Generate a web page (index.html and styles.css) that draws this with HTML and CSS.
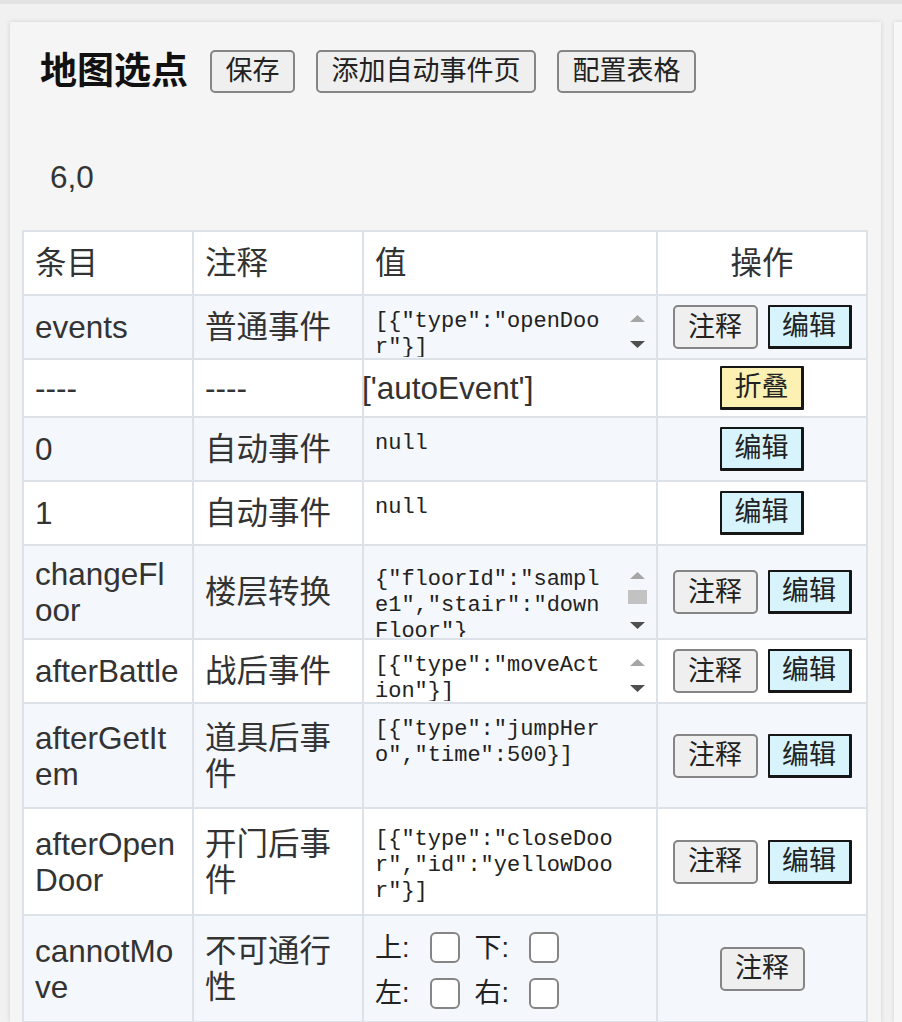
FILE: index.html
```html
<!DOCTYPE html>
<html lang="zh-CN">
<head>
<meta charset="utf-8">
<title>地图选点</title>
<link rel="stylesheet" href="styles.css">
</head>
<body>
<div class="topline"></div>
<div class="page">
  <section class="panel">
    <div class="head">
      <h2 class="title">地图选点</h2>
      <button class="btn">保存</button>
      <button class="btn">添加自动事件页</button>
      <button class="btn">配置表格</button>
    </div>
    <div class="coord">6,0</div>
    <table class="grid">
      <colgroup><col class="c1"><col class="c2"><col class="c3"><col class="c4"></colgroup>
      <thead>
        <tr class="r64"><th>条目</th><th>注释</th><th>值</th><th class="op">操作</th></tr>
      </thead>
      <tbody>
        <tr class="r64">
          <td class="key">events</td><td>普通事件</td>
          <td class="val"><div class="ta"><div class="ta-text">[{"type":"openDoor"}]</div><div class="sb"><span class="sb-btn"><svg width="15" height="7" viewBox="0 0 15 7"><path d="M7.5 0L15 7H0z" fill="#a6a6a6"/></svg></span><span class="sb-btn"><svg width="15" height="7" viewBox="0 0 15 7"><path d="M0 0H15L7.5 7z" fill="#4f4f4f"/></svg></span></div></div></td>
          <td class="op"><div class="ops"><button class="btn sm">注释</button><button class="btn sm edit">编辑</button></div></td>
        </tr>
        <tr class="r58">
          <td class="key">----</td><td>----</td>
          <td class="val-plain">['autoEvent']</td>
          <td class="op"><div class="ops"><button class="btn sm fold">折叠</button></div></td>
        </tr>
        <tr class="r64">
          <td class="key">0</td><td>自动事件</td>
          <td class="val"><div class="ta"><div class="ta-text">null</div></div></td>
          <td class="op"><div class="ops"><button class="btn sm edit">编辑</button></div></td>
        </tr>
        <tr class="r64">
          <td class="key">1</td><td>自动事件</td>
          <td class="val"><div class="ta"><div class="ta-text">null</div></div></td>
          <td class="op"><div class="ops"><button class="btn sm edit">编辑</button></div></td>
        </tr>
        <tr class="r94">
          <td class="key">changeFloor</td><td>楼层转换</td>
          <td class="val pt17"><div class="ta tall"><div class="ta-text">{"floorId":"sample1","stair":"downFloor"}</div><div class="sb"><span class="sb-btn"><svg width="15" height="7" viewBox="0 0 15 7"><path d="M7.5 0L15 7H0z" fill="#a6a6a6"/></svg></span><span class="sb-track"><span class="sb-thumb"></span></span><span class="sb-btn"><svg width="15" height="7" viewBox="0 0 15 7"><path d="M0 0H15L7.5 7z" fill="#4f4f4f"/></svg></span></div></div></td>
          <td class="op"><div class="ops"><button class="btn sm">注释</button><button class="btn sm edit">编辑</button></div></td>
        </tr>
        <tr class="r64">
          <td class="key">afterBattle</td><td>战后事件</td>
          <td class="val"><div class="ta"><div class="ta-text">[{"type":"moveAction"}]</div><div class="sb"><span class="sb-btn"><svg width="15" height="7" viewBox="0 0 15 7"><path d="M7.5 0L15 7H0z" fill="#a6a6a6"/></svg></span><span class="sb-btn"><svg width="15" height="7" viewBox="0 0 15 7"><path d="M0 0H15L7.5 7z" fill="#4f4f4f"/></svg></span></div></div></td>
          <td class="op"><div class="ops"><button class="btn sm">注释</button><button class="btn sm edit">编辑</button></div></td>
        </tr>
        <tr class="r105">
          <td class="key">afterGetItem</td><td>道具后事件</td>
          <td class="val"><div class="ta full"><div class="ta-text">[{"type":"jumpHero","time":500}]</div></div></td>
          <td class="op"><div class="ops"><button class="btn sm">注释</button><button class="btn sm edit">编辑</button></div></td>
        </tr>
        <tr class="r107">
          <td class="key">afterOpenDoor</td><td>开门后事件</td>
          <td class="val pt13"><div class="ta full"><div class="ta-text wide">[{"type":"closeDoor","id":"yellowDoor"}]</div></div></td>
          <td class="op"><div class="ops"><button class="btn sm">注释</button><button class="btn sm edit">编辑</button></div></td>
        </tr>
        <tr class="r107">
          <td class="key">cannotMove</td><td>不可通行性</td>
          <td class="val">
            <div class="dirs">
              <div class="dir-line"><span class="lab">上:</span><input type="checkbox" class="cb"><span class="lab">下:</span><input type="checkbox" class="cb"></div>
              <div class="dir-line"><span class="lab">左:</span><input type="checkbox" class="cb"><span class="lab">右:</span><input type="checkbox" class="cb"></div>
            </div>
          </td>
          <td class="op"><div class="ops"><button class="btn sm">注释</button></div></td>
        </tr>
      </tbody>
    </table>
  </section>
  <aside class="side"></aside>
</div>
</body>
</html>
```

FILE: styles.css
```css
* { box-sizing: border-box; }
html, body { margin: 0; height: 100%; }
body {
  background: #f1f1f1;
  font-family: "Liberation Sans", "Noto Sans CJK SC", sans-serif;
  color: #333;
  overflow: hidden;
}
.topline { height: 4px; background: #e3e3e3; }
.page {
  display: flex;
  gap: 13px;
  padding: 18px 0 0 10px;
  height: calc(100% - 4px);
}
.panel {
  flex: 0 0 870px;
  background: #f5f5f5;
  box-shadow: 0 0 5px rgba(0, 0, 0, 0.13);
  padding: 0 13px 0 12px;
}
.side {
  flex: 1 0 40px;
  background: #f7f7f7;
  box-shadow: 0 0 5px rgba(0, 0, 0, 0.13);
}
.head {
  display: flex;
  align-items: center;
  gap: 21px;
  padding: 28px 0 0 18px;
  height: 71px;
}
.title {
  margin: 0 1px 0 0;
  font-size: 37px;
  line-height: 43px;
  font-weight: bold;
  color: #111;
}
.btn {
  height: 43px;
  padding: 0 13.5px;
  font-family: "Liberation Sans", "Noto Sans CJK SC", sans-serif;
  font-size: 27px;
  line-height: 1;
  color: #222;
  background: #efefef;
  border: 2px solid #858585;
  border-radius: 5px;
}
.btn.sm { height: 44px; }
.btn.edit {
  background: #d7f3fc;
  border-color: #161616;
  border-width: 2px 3px 3px 2px;
  border-radius: 1px;
  padding: 0 12.5px;
}
.btn.fold {
  background: #fcf1b3;
  border-color: #161616;
  border-width: 2px 3px 3px 2px;
  border-radius: 1px;
  padding: 0 12.5px;
}
.coord {
  margin-top: 66px;
  padding-left: 28px;
  font-size: 31.5px;
  line-height: 36px;
  color: #333;
}
.grid {
  margin-top: 35px;
  border-collapse: collapse;
  table-layout: fixed;
  width: 844px;
  background: #fff;
  font-size: 31.5px;
  line-height: 36px;
}
.c1 { width: 170px; }
.c2 { width: 170px; }
.c3 { width: 294px; }
.c4 { width: 210px; }
.grid th, .grid td {
  border: 2px solid #dde2e8;
  padding: 0 11px;
  text-align: left;
  font-weight: normal;
  vertical-align: middle;
}
.grid th.op, .grid td.op { text-align: center; padding: 0; }
.grid tbody tr:nth-child(odd) { background: #f4f7fb; }
.r58 { height: 58px; }
.r64 { height: 64px; }
.r94 { height: 94px; }
.r105 { height: 105px; }
.r107 { height: 107px; }
.key { word-break: break-all; }
.grid td.val { vertical-align: top; padding: 9px 6px 0; }
.grid td.val.pt17 { padding-top: 17px; }
.grid td.val.pt13 { padding-top: 13.5px; }
.grid td.val-plain { padding: 0; text-indent: -2px; }
.ta { display: flex; width: 281px; height: 52px; }
.ta.tall { height: 74px; }
.ta.full { height: 82px; }
.ta-text {
  width: 17.6ch;
  box-sizing: content-box;
  padding: 4px 5px 0;
  overflow: hidden;
  font-family: "Liberation Mono", monospace;
  font-size: 22px;
  line-height: 26px;
  color: #222;
  word-break: break-all;
}
.ta-text.wide { width: 18.6ch; }
.sb {
  margin-left: auto;
  width: 27px;
  display: flex;
  flex-direction: column;
}
.sb-btn {
  flex: 0 0 24px;
  display: flex;
  align-items: center;
  justify-content: center;
}
.ta:not(.tall) .sb-btn { flex-basis: 26px; }
.sb-track { flex: 1; display: flex; flex-direction: column; padding: 3px 4px; }
.sb-thumb { height: 14px; background: #c2c2c2; }
.ops { display: flex; justify-content: center; gap: 10px; }
.dirs { display: flex; flex-direction: column; }
.dir-line {
  display: flex;
  align-items: center;
  height: 45.5px;
  padding-left: 5px;
  font-size: 27px;
  color: #222;
}
.cb {
  appearance: none;
  -webkit-appearance: none;
  width: 30px;
  height: 31px;
  margin: 0 15px 0 20px;
  border: 2px solid #858585;
  border-radius: 6px;
  background: #fff;
}
```
